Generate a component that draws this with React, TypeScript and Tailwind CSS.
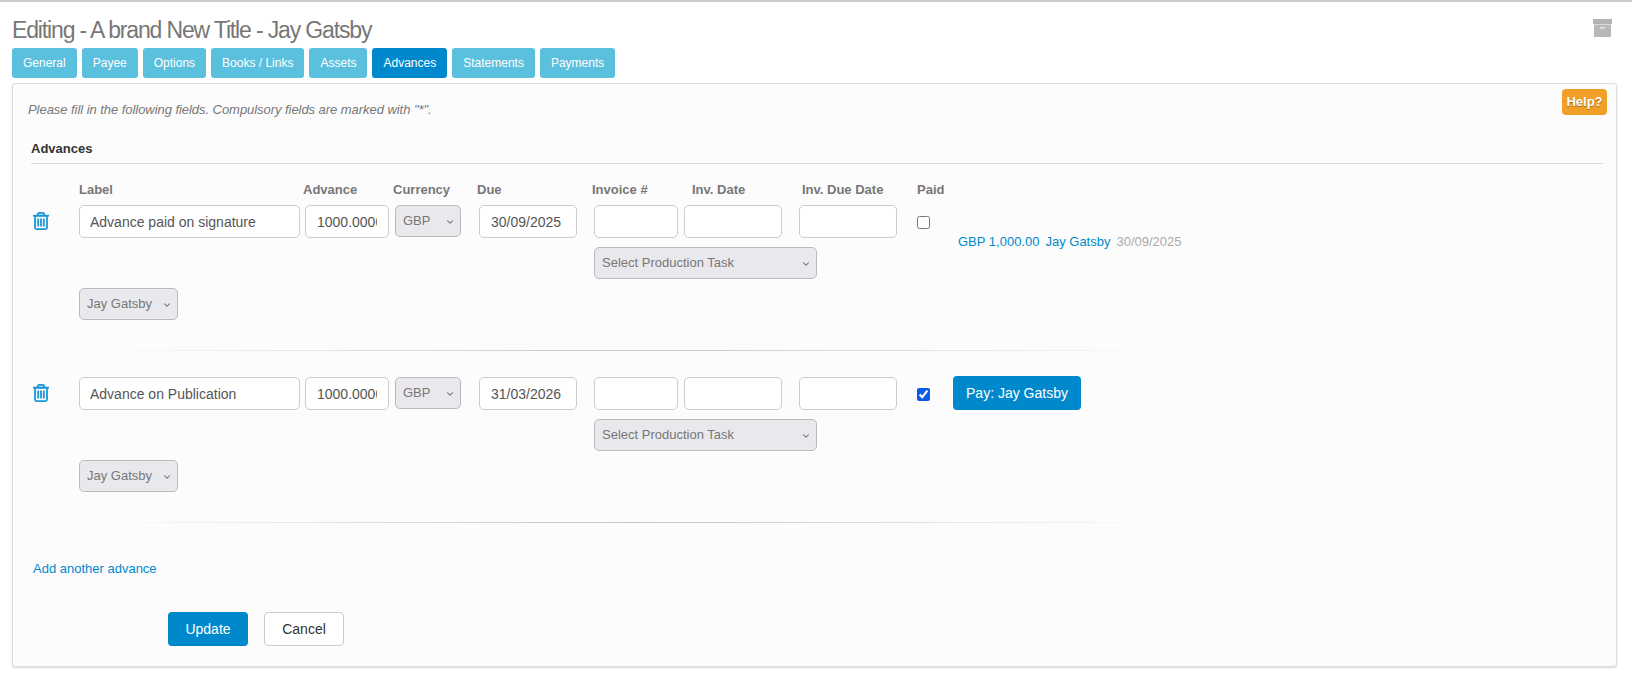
import React from "react";
import { LuChevronDown } from "react-icons/lu";

const tabs = ["General", "Payee", "Options", "Books / Links", "Assets", "Advances", "Statements", "Payments"];

const inputCls = "h-[33px] border border-[#ccc] rounded-[5px] bg-white px-[11px] text-[14px] text-[#555] outline-none";

function Select({ width, text, className = "" }: { width: string; text: string; className?: string }) {
  return (
    <div className={`relative ${width} ${className}`}>
      <select className="h-[32px] w-full appearance-none border border-[#bbb] rounded-[5px] bg-[#e9e9ed] pl-[7px] text-[13px] text-[#777] outline-none">
        <option>{text}</option>
      </select>
      <LuChevronDown size={10} strokeWidth={2.5} className="absolute right-[6px] top-[12px] text-[#666] pointer-events-none" />
    </div>
  );
}

function TrashIcon() {
  return (
    <svg width="16" height="18" viewBox="0 0 16 18" fill="none" stroke="#1a96d8" strokeWidth="1.8">
      <path d="M5 3.5V1.8Q5 .9 6 .9H10Q11 .9 11 1.8V3.5" />
      <path d="M0 3.7H16" />
      <rect x="2" y="3.7" width="12" height="13.4" rx="1.5" />
      <path d="M5.2 6.5V14.5M8 6.5V14.5M10.8 6.5V14.5" />
    </svg>
  );
}

function ArchiveIcon() {
  return (
    <svg width="19" height="18" viewBox="0 0 19 18">
      <rect x="0" y="0" width="19" height="5" fill="#b3b3b3" />
      <rect x="1" y="5.5" width="17" height="12.5" fill="#b8b8b8" />
      <rect x="7" y="8" width="5" height="1.5" fill="#e6e6e6" />
    </svg>
  );
}

function AdvanceRow({ label, due, paid }: { label: string; due: string; paid: boolean }) {
  return (
    <div>
      <div className="flex items-start">
        <div className="w-[48px] pl-[2px] pt-[7px]">
          <TrashIcon />
        </div>
        <input className={`${inputCls} w-[221px] pl-[10px]`} defaultValue={label} />
        <input className={`${inputCls} w-[84px] ml-[5px]`} defaultValue="1000.00000" />
        <Select width="w-[66px]" text="GBP" className="ml-[6px]" />
        <input className={`${inputCls} w-[98px] ml-[18px]`} defaultValue={due} />
        <div className="ml-[17px] flex flex-col">
          <div className="flex">
            <input className={`${inputCls} w-[84px]`} />
            <input className={`${inputCls} w-[98px] ml-[6px]`} />
            <input className={`${inputCls} w-[98px] ml-[17px]`} />
          </div>
          <Select width="w-[223px]" text="Select Production Task" className="mt-[9px]" />
        </div>
        <input type="checkbox" defaultChecked={paid} className="w-[13px] h-[13px] ml-[20px] mt-[11px] m-0 accent-[#0a5ce8]" />
        {paid ? (
          <button className="ml-[23px] -mt-[1px] h-[34px] w-[128px] rounded-[4px] bg-[#0088cc] text-[14px] text-white">
            Pay: Jay Gatsby
          </button>
        ) : (
          <div className="ml-[28px] mt-[29px] flex gap-[6px] text-[13px] leading-[16px] whitespace-nowrap">
            <span className="text-[#0088cc]">GBP 1,000.00</span>
            <span className="text-[#0088cc]">Jay Gatsby</span>
            <span className="text-[#aaa]">30/09/2025</span>
          </div>
        )}
      </div>
      <Select width="w-[99px]" text="Jay Gatsby" className="ml-[48px] mt-[9px]" />
      <div className="h-px mt-[30px] ml-[60px] w-[1080px] bg-gradient-to-r from-transparent via-[#c4c4c4] to-transparent" />
    </div>
  );
}

export default function App() {
  return (
    <div className="min-h-[674px] bg-white font-['Liberation_Sans',Arial,sans-serif] border-t-2 border-[#ccc] px-[12px] pb-[8px]">
      <div className="flex justify-between h-[46px]">
        <h1 className="mt-[12px] text-[23px] leading-[32px] tracking-[-1.15px] text-[#777]">
          Editing - A brand New Title - Jay Gatsby
        </h1>
        <div className="mt-[17px] mr-[8px]">
          <ArchiveIcon />
        </div>
      </div>

      <div className="flex gap-[5px]">
        {tabs.map((t) => (
          <div
            key={t}
            className={`h-[30px] px-[11px] rounded-[3px] text-[12px] leading-[30px] text-white ${
              t === "Advances" ? "bg-[#0088cc]" : "bg-[#5bc0de]"
            }`}
          >
            {t}
          </div>
        ))}
      </div>

      <div className="relative mt-[5px] mr-[3px] h-[584px] rounded-[3px] border border-[#ddd] bg-[#fcfcfc] shadow-[0_1px_2px_rgba(0,0,0,0.15)] pl-[18px] pr-[13px]">
        <div className="absolute right-[9px] top-[5px] h-[26px] w-[45px] rounded-[4px] bg-[#f0a028] text-center text-[13px] font-bold leading-[26px] text-white [text-shadow:0_1px_1px_rgba(0,0,0,0.35)]">
          Help?
        </div>
        <p className="pt-[18px] -ml-[3px] text-[13px] tracking-[-0.05px] italic leading-[16px] text-[#777]">
          Please fill in the following fields. Compulsory fields are marked with "*".
        </p>
        <h2 className="mt-[23px] pb-[6px] border-b border-[#ddd] text-[13px] font-bold leading-[16px] text-[#333]">
          Advances
        </h2>

        <div className="mt-[18px] flex text-[13px] font-bold leading-[16px] text-[#777]">
          <span className="ml-[48px] w-[224px]">Label</span>
          <span className="w-[90px]">Advance</span>
          <span className="w-[84px]">Currency</span>
          <span className="w-[115px]">Due</span>
          <span className="w-[100px]">Invoice #</span>
          <span className="w-[110px]">Inv. Date</span>
          <span className="w-[115px]">Inv. Due Date</span>
          <span>Paid</span>
        </div>

        <div className="mt-[7px] flex flex-col gap-[26px]">
          <AdvanceRow label="Advance paid on signature" due="30/09/2025" paid={false} />
          <AdvanceRow label="Advance on Publication" due="31/03/2026" paid={true} />
        </div>

        <a className="mt-[38px] ml-[2px] block text-[13px] leading-[16px] text-[#0088cc]">Add another advance</a>

        <div className="mt-[35px] ml-[137px] flex gap-[16px]">
          <button className="h-[34px] w-[80px] rounded-[4px] bg-[#0088cc] text-[14px] text-white">Update</button>
          <button className="h-[34px] w-[80px] rounded-[4px] border border-[#ccc] bg-white text-[14px] text-[#333]">Cancel</button>
        </div>
      </div>
    </div>
  );
}
